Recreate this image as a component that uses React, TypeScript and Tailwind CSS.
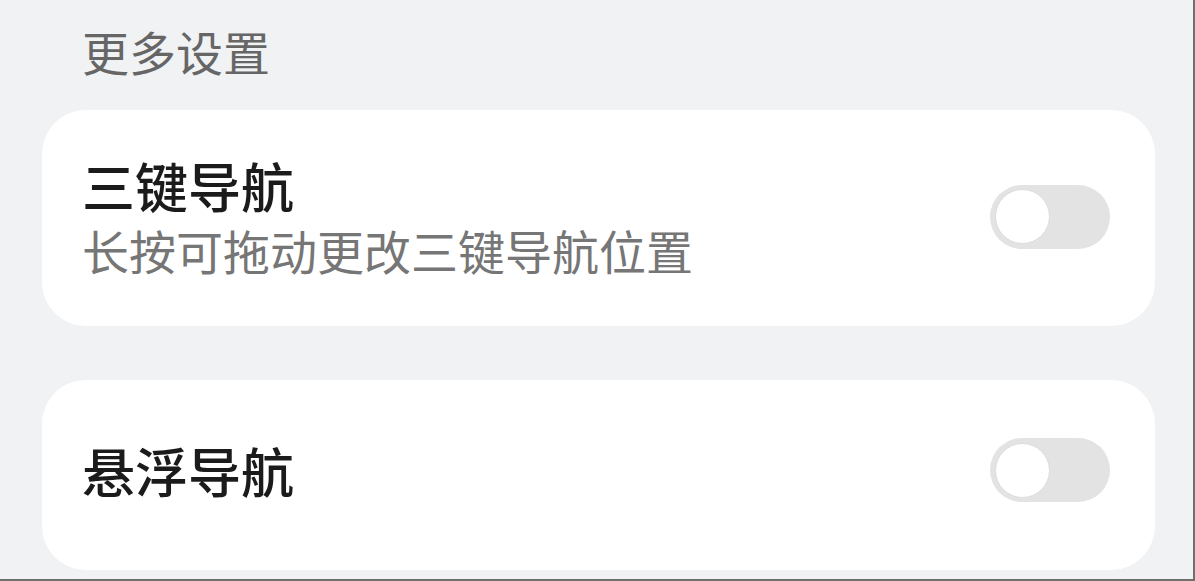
import React, { useState } from "react";

type ToggleProps = {
  on: boolean;
  onChange: () => void;
};

const Toggle = ({ on, onChange }: ToggleProps) => {
  return (
    <button
      onClick={onChange}
      className={`flex h-[64px] w-[120px] shrink-0 items-center rounded-full px-[5px] ${
        on ? "justify-end bg-[#3a7afe]" : "justify-start bg-[#e3e3e3]"
      }`}
    >
      <span className="h-[55px] w-[55px] rounded-full border border-[#dcdcdc] bg-white" />
    </button>
  );
};

type RowProps = {
  title: string;
  subtitle?: string;
  className: string;
};

const SettingCard = ({ title, subtitle, className }: RowProps) => {
  const [isOn, setIsOn] = useState<boolean>(false);

  return (
    <div
      className={`flex items-center justify-between rounded-[44px] bg-white pl-[40px] pr-[45px] ${className}`}
    >
      <div className="flex flex-col gap-[6px]">
        <p className="text-[53px] font-medium leading-[60px] text-[#1b1b1b]">
          {title}
        </p>
        {subtitle && (
          <p className="text-[47px] leading-[58px] text-[#767676]">
            {subtitle}
          </p>
        )}
      </div>
      <Toggle on={isOn} onChange={() => setIsOn(!isOn)} />
    </div>
  );
};

export default function App() {
  return (
    <div
      className="flex h-[581px] w-[1195px] flex-col overflow-hidden border-r-2 border-b-2 border-[#6f6f6f] bg-[#f1f2f4] pl-[42px] pr-[38px]"
      style={{ fontFamily: '"Noto Sans CJK SC", "Noto Sans", sans-serif' }}
    >
      <p className="mt-[23px] h-[56px] pl-[40px] text-[47px] leading-[56px] text-[#666666]">
        更多设置
      </p>
      <SettingCard
        title="三键导航"
        subtitle="长按可拖动更改三键导航位置"
        className="mt-[31px] h-[216px] pb-[3px]"
      />
      <SettingCard title="悬浮导航" className="mt-[54px] h-[190px] pb-[10px]" />
    </div>
  );
}
